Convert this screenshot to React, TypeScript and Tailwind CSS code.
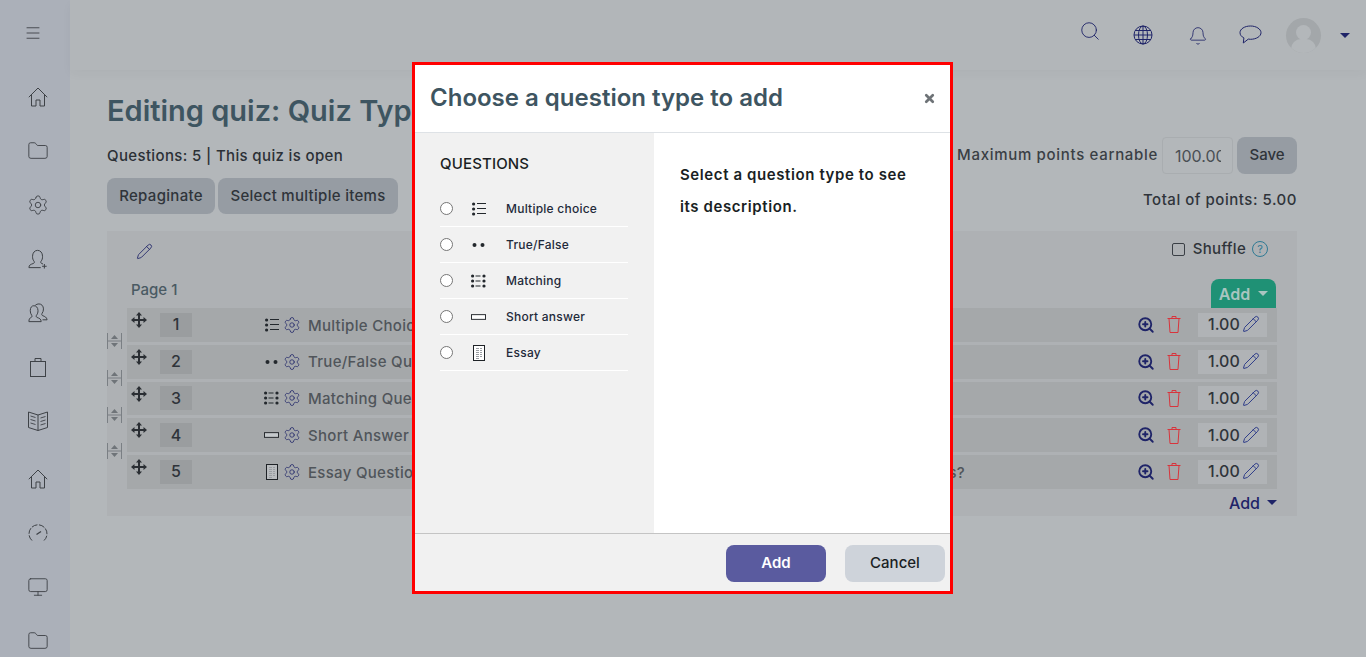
import { Bell, Folder, Menu, Monitor, Pencil, Search, Settings, ZoomIn, X } from "lucide-react";

const FONT = "font-['Inter','Liberation_Sans',sans-serif]";

function HouseIcon() {
  return (
    <svg width="20" height="20" viewBox="0 0 20 20" fill="none" stroke="#3e4247" strokeWidth="1">
      <path d="M.8 10.200 10 1l9.200 9.200" />
      <path d="M3.500 8v11h4.500v-6h4v6h4.500V8" />
    </svg>
  );
}

function BagIcon() {
  return (
    <svg width="16" height="20" viewBox="0 0 16 20" fill="none" stroke="#3e4247" strokeWidth="1">
      <rect x="0.500" y="4.500" width="15" height="15" />
      <path d="M5 4.500V1.500h6v3" />
    </svg>
  );
}

function BookIcon() {
  return (
    <svg width="20" height="20" viewBox="0 0 20 20" fill="none" stroke="#3e4247" strokeWidth="1">
      <path d="M10 4 .5 1v15.500l9.500 3 9.500-3V1z" />
      <path d="M10 4v15.500" />
      <path d="m2.500 5 5 1.500m-5 2 5 1.500m-5 2 5 1.500m10-8-5 1.500m5 2-5 1.500m5 2-5 1.500" strokeWidth="0.900" />
    </svg>
  );
}

function GaugeIcon() {
  return (
    <svg width="20" height="20" viewBox="0 0 20 20" fill="none" stroke="#3e4247" strokeWidth="1">
      <path d="M4 17.500a9 9 0 1 1 12 0" strokeDasharray="6 1.500" />
      <path d="m8.500 11.500 4.500-3" strokeWidth="1.300" />
    </svg>
  );
}

function UserPlusIcon() {
  return (
    <svg width="20" height="20" viewBox="0 0 22 22" fill="none" stroke="#3e4247" strokeWidth="1.100">
      <path d="M1 20.500h13M1 20.500c0-3 2-3.600 5-4.600 1.200-.5 1.200-1.600.6-2.500C5.400 12 5 10.500 5 8c0-4 2.500-6.500 5.500-6.500S16 4 16 8c0 2.500-.4 4-1.600 5.400-.6.9-.6 2 .6 2.500l1.500.6" />
      <path d="M18 16.500v5M15.500 19h5" />
    </svg>
  );
}

function UsersIcon() {
  return (
    <svg width="20" height="20" viewBox="0 0 22 22" fill="none" stroke="#3e4247" strokeWidth="1.100">
      <path d="M1 20.500h13.500c0-3-2-3.600-4.500-4.600-1.200-.5-1.200-1.600-.6-2.500C10.500 12 11 10.500 11 8.500c0-3.500-2-5.500-4.500-5.500S2.500 5 2.500 8.500c0 2 .5 3.500 1.500 4.900.6.9.6 2-.6 2.500C2 16.500 1 17.500 1 20.500z" />
      <path d="M8 2.500C9 1.500 10.500 1 12 1c2.800 0 5 2.200 5 5.500 0 2-.5 3.500-1.500 4.900-.6.9-.6 2 .6 2.500 2.500 1 4.400 1.600 4.900 4.600h-5" />
    </svg>
  );
}

function GlobeIcon() {
  return (
    <svg width="20" height="20" viewBox="0 0 20 20" fill="none" stroke="#1f2468" strokeWidth="1">
      <circle cx="10" cy="10" r="9" />
      <ellipse cx="10" cy="10" rx="4.500" ry="9" />
      <path d="M10 1v18M1 10h18M2.200 5.500h15.600M2.200 14.500h15.600" />
    </svg>
  );
}

function ChatIcon() {
  return (
    <svg width="23" height="20" viewBox="0 0 23 20" fill="none" stroke="#1f2468" strokeWidth="1">
      <path d="M11.500 1C5.700 1 1 3.900 1 7.700c0 2.200 1.500 4 3.900 5.200L4.300 18l5-3.900c.7.100 1.400.2 2.200.2 5.800 0 10.500-3 10.500-6.600S17.300 1 11.500 1z" />
    </svg>
  );
}

function TrashIcon() {
  return (
    <svg width="14" height="17" viewBox="0 0 14 17" fill="none" stroke="#d8343c" strokeWidth="1">
      <path d="M.5 2.500h13M5 2.500V.5h4v2M2 2.500l1 14h8l1-14" />
    </svg>
  );
}

function MultiIcon() {
  return (
    <svg width="14" height="14" viewBox="0 0 14 14" fill="#23282d">
      <circle cx="1.600" cy="2" r="1.600" />
      <circle cx="1.600" cy="7" r="1.600" />
      <circle cx="1.600" cy="12" r="1.600" />
      <rect x="5" y="1" width="9" height="1" />
      <rect x="5" y="6" width="9" height="1" />
      <rect x="5" y="11" width="9" height="1" />
    </svg>
  );
}

function DotsIcon() {
  return (
    <svg width="14" height="14" viewBox="0 0 14 14" fill="#23282d">
      <circle cx="2.500" cy="7" r="2" />
      <circle cx="10.500" cy="7" r="2" />
    </svg>
  );
}

function MatchIcon() {
  return (
    <svg width="15" height="14" viewBox="0 0 15 14" fill="#23282d">
      {[2, 7, 12].map((y) => (
        <g key={y}>
          <circle cx="1.600" cy={y} r="1.600" />
          <rect x="4.500" y={y - 0.5} width="5" height="1" />
          <circle cx="13" cy={y} r="1.600" />
        </g>
      ))}
    </svg>
  );
}

function ShortIcon({ fill }: { fill: string }) {
  return (
    <svg width="16" height="8" viewBox="0 0 16 8">
      <rect x="0.500" y="1.500" width="15" height="5" fill={fill} stroke="#1e2226" />
    </svg>
  );
}

function EssayIcon({ fill }: { fill: string }) {
  return (
    <svg width="12" height="16" viewBox="0 0 12 16" fill="none">
      <rect x="0.500" y="0.500" width="11" height="15" fill={fill} stroke="#1e2226" />
      <path d="M3 3.500h6M3 5.500h6M3 7.500h6M3 9.500h6M3 11.500h6M3 13.500h4" stroke="#9a9ea2" strokeWidth="1" strokeDasharray="3 1" />
    </svg>
  );
}

function MoveIcon() {
  return (
    <svg width="16" height="16" viewBox="0 0 16 16" fill="#2a2e33">
      <path d="M8 0 11 3.500H9v3.500h3.500V5L16 8l-3.500 3V9H9v3.500h2L8 16l-3-3.500h2V9H3.500v2L0 8l3.500-3v2H7V3.500H5z" />
    </svg>
  );
}

function InserterIcon() {
  return (
    <svg width="15" height="16" viewBox="0 0 15 16" fill="#6f7479">
      <path d="M.5 0v16M14.500 0v16M1 8h13" stroke="#7a7f84" fill="none" />
      <path d="M7.500 2 11 6H4zM7.500 14 11 10H4z" />
    </svg>
  );
}

function Caret({ className }: { className: string }) {
  return <span className={`inline-block w-0 h-0 border-x-[5px] border-x-transparent border-t-[5px] ${className}`} />;
}

const SIDE_ICONS = [
  <HouseIcon key="a" />,
  <Folder key="b" size={22} strokeWidth={1} />,
  <Settings key="c" size={22} strokeWidth={1} />,
  <UserPlusIcon key="d" />,
  <UsersIcon key="e" />,
  <BagIcon key="f" />,
  <BookIcon key="g" />,
];

const SIDE_ICONS_2 = [
  <HouseIcon key="a" />,
  <GaugeIcon key="b" />,
  <Monitor key="c" size={22} strokeWidth={1} />,
  <Folder key="d" size={22} strokeWidth={1} />,
];

const ROWS = [
  { n: 1, icon: <MultiIcon />, name: "Multiple Choice Question", tail: "" },
  { n: 2, icon: <DotsIcon />, name: "True/False Question", tail: "" },
  { n: 3, icon: <MatchIcon />, name: "Matching Question", tail: "" },
  { n: 4, icon: <ShortIcon fill="#c5c9cc" />, name: "Short Answer Question", tail: "" },
  { n: 5, icon: <EssayIcon fill="#b9bcbf" />, name: "Essay Question", tail: "What are the benefits of daily exercises?" },
];

const TYPES = [
  { label: "Multiple choice", icon: <MultiIcon /> },
  { label: "True/False", icon: <DotsIcon /> },
  { label: "Matching", icon: <MatchIcon /> },
  { label: "Short answer", icon: <ShortIcon fill="#ffffff" /> },
  { label: "Essay", icon: <EssayIcon fill="#ffffff" /> },
];

export default function App() {
  return (
    <div className={`relative flex h-[657px] w-[1366px] overflow-hidden bg-[#b3b7ba] ${FONT}`}>
      <aside className="flex w-[70px] shrink-0 flex-col bg-[#abb0b9] text-[#3e4247]">
        <div className="flex h-[66px] shrink-0 items-center pl-[24px]">
          <Menu size={18} strokeWidth={1.200} />
        </div>
        <div className="mt-[4px] flex h-[362px] flex-col items-center justify-between pl-[6px] pt-[16px]">
          {SIDE_ICONS.map((icon, i) => (
            <span key={i} className="flex h-[22px] items-center">{icon}</span>
          ))}
        </div>
        <div className="mt-[36px] flex flex-col items-center gap-[32px] pl-[6px]">
          {SIDE_ICONS_2.map((icon, i) => (
            <span key={i} className="flex h-[22px] items-center">{icon}</span>
          ))}
        </div>
      </aside>

      <div className="flex min-w-0 flex-1 flex-col">
        <header className="flex h-[70px] shrink-0 items-center justify-end bg-[#b2b6b9] pr-[16px] text-[#1f2468] shadow-[0_4px_10px_rgba(0,0,0,0.03)]">
          <Search size={22} strokeWidth={1} className="mb-[8px]" />
          <span className="ml-[32px]"><GlobeIcon /></span>
          <Bell size={20} strokeWidth={1} className="ml-[35px] mt-[2px]" />
          <span className="ml-[31px] block"><ChatIcon /></span>
          <div className="relative ml-[24px] h-[35px] w-[35px] overflow-hidden rounded-full bg-[#a3a7aa]">
            <div className="absolute left-[10px] top-[7px] h-[15px] w-[15px] rounded-full bg-[#b3b7ba]" />
            <div className="absolute left-[5px] top-[21px] h-[20px] w-[25px] rounded-full bg-[#b3b7ba]" />
          </div>
          <Caret className="ml-[19px] border-t-[#1f2468]" />
        </header>

        <main className="pl-[37px] pr-[69px] pt-[22px]">
          <h1 className="h-[38px] whitespace-nowrap text-[29px] font-semibold leading-[38px] text-[#3e5561]">Editing quiz: Quiz Types</h1>
          <div className="mt-[7px] flex h-[37px] items-center justify-between">
            <p className="pt-[1px] text-[15px] font-medium tracking-[0.024em] text-[#2b3036]">Questions: 5 | This quiz is open</p>
            <div className="flex items-center">
              <span className="text-[15px] font-medium tracking-[0.046em] text-[#3a3f45]">Maximum points earnable</span>
              <span className="ml-[4px] flex h-[37px] w-[71px] items-center rounded-[4px] border border-[#a9adb0] pl-[12px] text-[16px] text-[#4a4f54]">
                <span className="block w-[46px] overflow-hidden">100.00</span>
              </span>
              <button className="ml-[4px] h-[37px] w-[60px] rounded-[8px] bg-[#969ca3] text-[15px] font-medium text-[#2f343a]">Save</button>
            </div>
          </div>
          <div className="mt-[4px] flex h-[36px] items-start justify-between">
            <div className="flex gap-[3px]">
              <button className="h-[36px] w-[108px] rounded-[8px] bg-[#969ca3] text-[15px] font-medium tracking-[0.02em] text-[#2f343a]">Repaginate</button>
              <button className="h-[36px] w-[180px] rounded-[8px] bg-[#969ca3] text-[15px] font-medium tracking-[0.02em] text-[#2f343a]">Select multiple items</button>
            </div>
            <p className="mt-[11px] text-[15px] font-medium tracking-[0.035em] text-[#2f343a]">Total of points: 5.00</p>
          </div>

          <section className="mt-[17px] h-[285px] bg-[#aeb1b4] px-[20px]">
            <div className="flex h-[48px] items-start justify-between">
              <Pencil size={17} strokeWidth={1.200} className="ml-[9px] mt-[12px] text-[#1f2468]" />
              <div className="mr-[9px] mt-[7px] flex items-center">
                <span className="h-[13px] w-[13px] rounded-[2px] border border-[#3a3f45]" />
                <span className="ml-[8px] text-[15px] font-medium tracking-[0.02em] text-[#2f343a]">Shuffle</span>
                <span className="ml-[6px] flex h-[16px] w-[16px] items-center justify-center rounded-full border border-[#2f7a94] text-[11px] text-[#2f7a94]">?</span>
              </div>
            </div>
            <div className="flex h-[29px] items-start justify-between pl-[4px]">
              <span className="pt-[1px] text-[15px] font-medium leading-[20px] text-[#4a5a63]">Page 1</span>
              <button className="mr-[1px] flex h-[29px] w-[65px] items-center justify-center gap-[8px] rounded-t-[8px] bg-[#1f9175] text-[16px] font-semibold text-[#a9c5c0]">
                Add <Caret className="border-t-[#a9c5c0]" />
              </button>
            </div>
            <div className="flex flex-col gap-[3px]">
              {ROWS.map((r) => (
                <div key={r.n} className="relative flex h-[33.750px] items-center bg-[#a5a8aa]">
                  <span className="absolute left-[4px] top-[4px]"><MoveIcon /></span>
                  {r.n < 5 && <span className="absolute -left-[20px] top-[25px]"><InserterIcon /></span>}
                  <span className="ml-[33px] flex h-[24px] w-[32px] items-center justify-center bg-[#9a9d9f] pb-[1px] text-[16px] font-medium text-[#2f343a]">{r.n}</span>
                  <span className="ml-[72px] flex w-[15px] justify-center">{r.icon}</span>
                  <Settings size={18} strokeWidth={1} className="ml-[4px] text-[#1f2468]" />
                  <div className="ml-[7px] mr-[172px] mt-[2px] flex min-w-0 flex-1 justify-between whitespace-nowrap text-[15px] font-medium tracking-[0.02em] text-[#50555a]">
                    <span>{r.name}</span>
                    <span>{r.tail}</span>
                  </div>
                  <ZoomIn size={18} strokeWidth={2.500} className="text-[#1f2468]" />
                  <span className="ml-[12px] block"><TrashIcon /></span>
                  <span className="ml-[17px] mr-[10px] flex h-[24px] w-[69px] items-center bg-[#b0b3b6] pb-[1px] pl-[10px] text-[16px] font-medium text-[#2f343a]">
                    1.00
                    <Pencil size={18} strokeWidth={1.300} className="ml-[2px] text-[#2b3a88]" />
                  </span>
                </div>
              ))}
            </div>
            <div className="mt-[2px] flex items-center justify-end gap-[7px] text-[16px] font-medium text-[#1f2468]">
              Add <Caret className="border-t-[#1f2468]" />
            </div>
          </section>
        </main>
      </div>

      <div className="absolute left-[412px] top-[62px] flex h-[532px] w-[541px] flex-col border-[3px] border-[#ff0000] bg-white">
        <div className="flex h-[68px] shrink-0 items-center justify-between border-b border-[#dee2e6] pl-[15px] pr-[14px]">
          <h2 className="pb-[1px] text-[24px] font-semibold text-[#3e5561]">Choose a question type to add</h2>
          <X size={13} strokeWidth={5} className="text-[#6e7377]" />
        </div>
        <div className="flex min-h-0 flex-1">
          <div className="w-[239px] shrink-0 bg-[#f1f1f1] pl-[25px] pr-[26px]">
            <p className="mt-[21px] h-[20px] text-[15px] font-medium leading-[20px] tracking-[0.01em] text-[#1a1f24]">QUESTIONS</p>
            <div className="mt-[17px]">
              {TYPES.map((t) => (
                <div key={t.label} className="flex h-[36px] items-center border-b border-white">
                  <span className="h-[13px] w-[13px] rounded-full border border-[#767676] bg-white" />
                  <span className="ml-[18px] flex w-[15px] justify-center">{t.icon}</span>
                  <span className="ml-[20px] pt-[1px] text-[12px] font-medium tracking-[0.02em] text-[#1f2a3a]">{t.label}</span>
                </div>
              ))}
            </div>
          </div>
          <div className="flex-1 pl-[26px] pr-[40px] pt-[26px]">
            <p className="text-[15px] font-semibold leading-[32px] tracking-[0.04em] text-[#1a1f24]">Select a question type to see its description.</p>
          </div>
        </div>
        <div className="flex h-[58px] shrink-0 items-start justify-end gap-[19px] border-t border-[#c4c4c4] bg-[#f1f1f1] pr-[5px] pt-[11px]">
          <button className="h-[37px] w-[100px] rounded-[8px] bg-[#5a5b9f] text-[15px] font-semibold text-white">Add</button>
          <button className="h-[37px] w-[100px] rounded-[8px] bg-[#ced3da] text-[15px] font-medium text-[#1a1f24]">Cancel</button>
        </div>
      </div>
    </div>
  );
}
